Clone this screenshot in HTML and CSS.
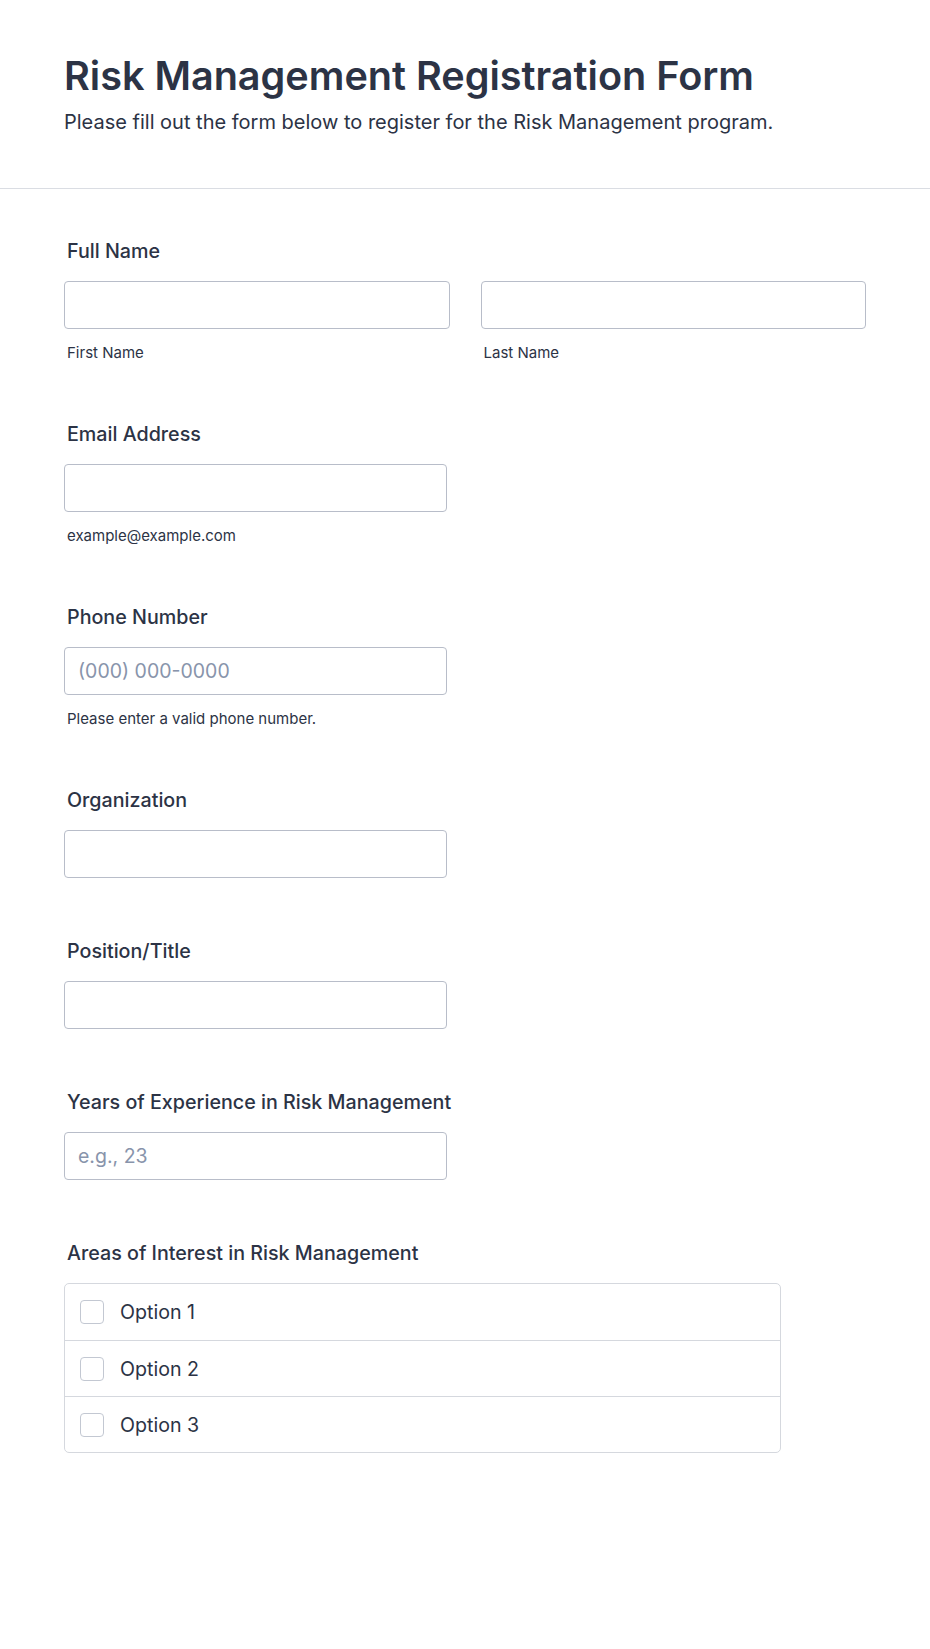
FILE: index.html
```html
<!DOCTYPE html>
<html lang="en">
<head>
<meta charset="utf-8">
<title>Risk Management Registration Form</title>
<link rel="stylesheet" href="styles.css">
</head>
<body>
<header class="form-header">
  <h1 class="form-title">Risk Management Registration Form</h1>
  <p class="form-subtitle">Please fill out the form below to register for the Risk Management program.</p>
</header>
<main class="form-body">
  <div class="field">
    <label class="field-label">Full Name</label>
    <div class="name-row">
      <div class="name-col">
        <input class="text-input" type="text">
        <span class="sublabel">First Name</span>
      </div>
      <div class="name-col">
        <input class="text-input" type="text">
        <span class="sublabel">Last Name</span>
      </div>
    </div>
  </div>

  <div class="field">
    <label class="field-label">Email Address</label>
    <input class="text-input short" type="email">
    <span class="sublabel">example@example.com</span>
  </div>

  <div class="field">
    <label class="field-label">Phone Number</label>
    <input class="text-input short" type="tel" placeholder="(000) 000-0000">
    <span class="sublabel">Please enter a valid phone number.</span>
  </div>

  <div class="field field-plain">
    <label class="field-label">Organization</label>
    <input class="text-input short" type="text">
  </div>

  <div class="field field-plain">
    <label class="field-label">Position/Title</label>
    <input class="text-input short" type="text">
  </div>

  <div class="field field-plain">
    <label class="field-label">Years of Experience in Risk Management</label>
    <input class="text-input short" type="text" placeholder="e.g., 23">
  </div>

  <div class="field">
    <label class="field-label">Areas of Interest in Risk Management</label>
    <div class="check-group">
      <label class="check-row"><span class="check-box"></span><span class="check-text">Option 1</span></label>
      <label class="check-row"><span class="check-box"></span><span class="check-text">Option 2</span></label>
      <label class="check-row"><span class="check-box"></span><span class="check-text">Option 3</span></label>
    </div>
  </div>
</main>
</body>
</html>
```

FILE: styles.css
```css
* { box-sizing: border-box; }

html, body {
  margin: 0;
  padding: 0;
  background: #ffffff;
}

body {
  font-family: Inter, "Noto Sans", "Liberation Sans", sans-serif;
  color: #2c3345;
}

.form-header {
  padding: 53px 64px 54px;
  border-bottom: 1px solid #dadde3;
}

.form-title {
  margin: 0;
  font-size: 39.6px;
  line-height: 46px;
  font-weight: 600;
  color: #2c3345;
}

.form-subtitle {
  margin: 11px 0 0;
  font-size: 20px;
  line-height: 24px;
  font-weight: 400;
  color: #2c3345;
}

.form-body {
  padding: 50px 64px 120px;
  display: flex;
  flex-direction: column;
  gap: 60px;
}

.field {
  display: flex;
  flex-direction: column;
  align-items: flex-start;
}

.field-plain {
  padding-bottom: 1px;
}

.field-label {
  display: block;
  font-size: 19.7px;
  line-height: 24px;
  font-weight: 500;
  margin: 0 0 18px 3px;
  color: #2c3345;
}

.name-row {
  display: grid;
  grid-template-columns: 1fr 1fr;
  column-gap: 31px;
  width: 802px;
}

.name-col {
  display: flex;
  flex-direction: column;
}

.text-input {
  display: block;
  width: 100%;
  height: 48px;
  border: 1px solid #b8bdc9;
  border-radius: 4px;
  padding: 0 13px;
  font-family: inherit;
  font-size: 19.5px;
  color: #2c3345;
  background: #fff;
  outline: none;
}

.text-input.short {
  width: 383px;
}

.text-input::placeholder {
  color: #8894ab;
}

.sublabel {
  display: block;
  margin: 14px 0 0 3px;
  font-size: 15px;
  line-height: 19px;
  color: #2c3345;
}

.check-group {
  width: 717px;
  border: 1px solid #d5d8de;
  border-radius: 5px;
  display: flex;
  flex-direction: column;
}

.check-row {
  display: flex;
  align-items: center;
  gap: 16px;
  height: 56px;
  padding: 0 15px;
  border-top: 1px solid #d5d8de;
}

.check-row:first-child {
  border-top: none;
}

.check-box {
  width: 24px;
  height: 24px;
  border: 1px solid #c3c8d2;
  border-radius: 4px;
  background: #fff;
  flex: none;
}

.check-text {
  font-size: 19.6px;
  line-height: 24px;
  color: #2c3345;
}
```
